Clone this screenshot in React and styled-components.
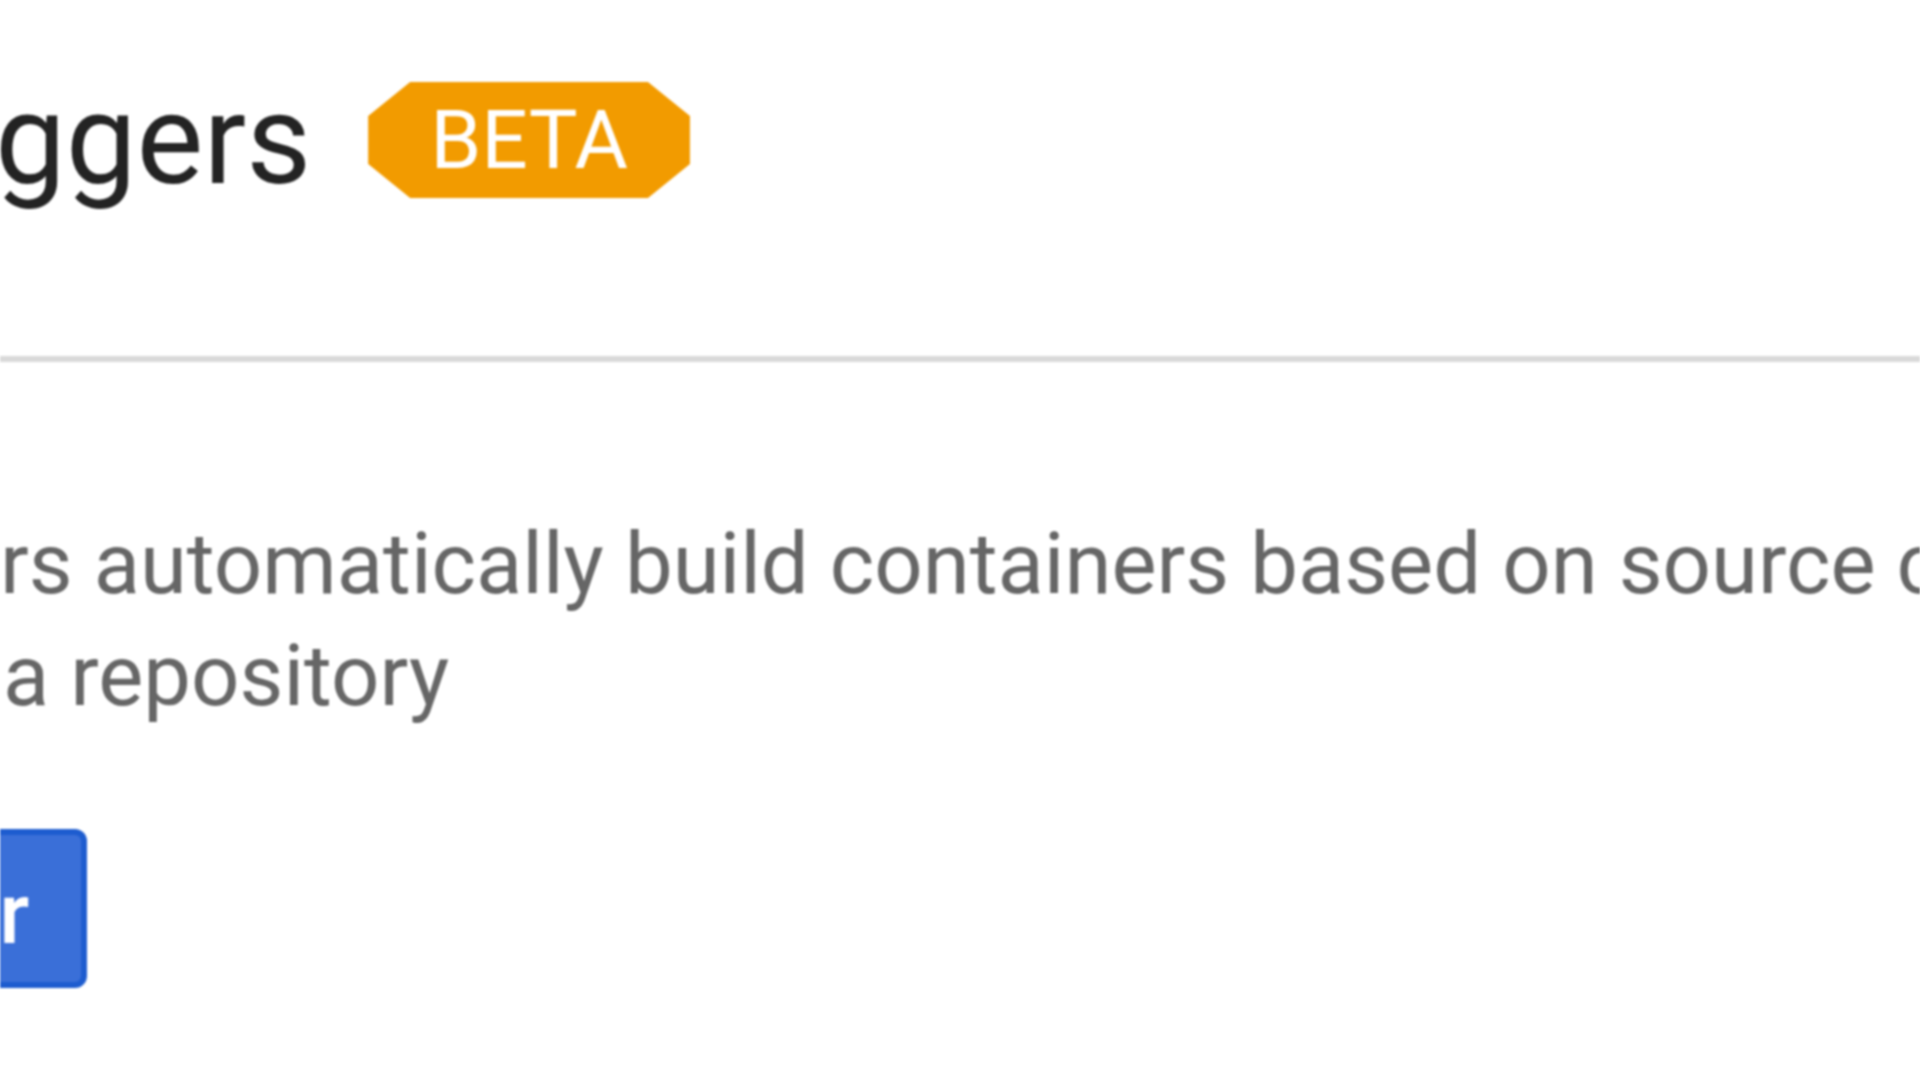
import React from 'react'
import styled, { createGlobalStyle } from 'styled-components'

const GlobalStyle = createGlobalStyle`
  html, body {
    margin: 0;
    padding: 0;
    background: #fff;
    overflow: hidden;
  }

  body {
    font-family: Roboto, 'Liberation Sans', sans-serif;
  }
`

function App() {
  return (
    <>
      <GlobalStyle />
      <Page>
        <Inner>
          <Header>
            <Title>Build triggers</Title>
            <Badge>BETA</Badge>
          </Header>
          <Body>
            <Description>
              Build triggers automatically build containers based on source code changes in a repository
            </Description>
            <Button>Add trigger</Button>
          </Body>
        </Inner>
      </Page>
    </>
  )
}

export default App

const Page = styled.div`
  width: 1920px;
  height: 1080px;
  overflow: hidden;
  filter: blur(1.2px);
`

const Inner = styled.div`
  margin-left: -438px;
  width: 3000px;
`

const Header = styled.div`
  display: flex;
  align-items: center;
  gap: 57px;
  padding: 77px 0 153px;
  border-bottom: 6px solid #d9d9d9;
`

const Title = styled.h1`
  margin: 0;
  padding-left: 7px;
  font-size: 126px;
  font-weight: 400;
  line-height: 1;
  color: #232323;
  white-space: nowrap;
`

const Badge = styled.span`
  display: flex;
  align-items: center;
  height: 116px;
  padding: 0 62px;
  background: #f29b00;
  color: #fff;
  font-size: 82px;
  line-height: 1;
  clip-path: polygon(
    42px 0,
    calc(100% - 42px) 0,
    100% 34px,
    100% calc(100% - 34px),
    calc(100% - 42px) 100%,
    42px 100%,
    0 calc(100% - 34px),
    0 34px
  );
`

const Body = styled.div`
  padding-top: 146px;
`

const Description = styled.p`
  margin: 0;
  padding-left: 10px;
  max-width: 2700px;
  font-size: 85px;
  line-height: 112px;
  color: #666;
`

const Button = styled.button`
  display: flex;
  align-items: center;
  box-sizing: border-box;
  height: 159px;
  margin-top: 97px;
  padding: 10px 52px 0 36px;
  font-family: inherit;
  font-size: 85px;
  font-weight: 500;
  color: #fff;
  background: #3a6fd8;
  border: 6px solid #1d5ccf;
  border-radius: 12px;
`
